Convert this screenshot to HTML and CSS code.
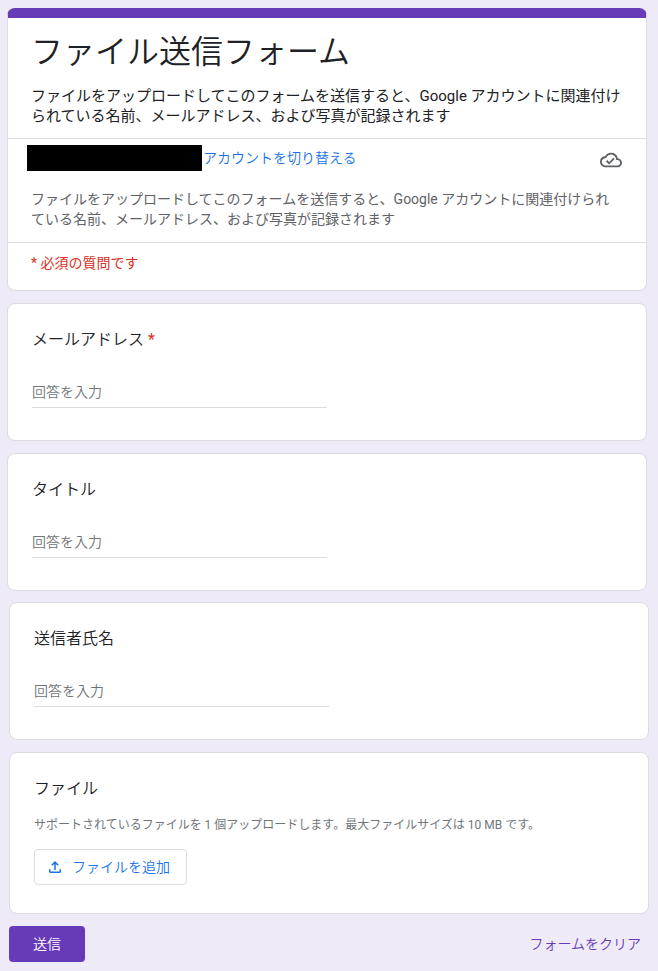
FILE: index.html
```
<!DOCTYPE html>
<html lang="ja">
<head>
    <meta charset="UTF-8">
    <meta name="viewport" content="width=device-width, initial-scale=1.0">
    <title>ファイル送信フォーム</title>
    <link rel="stylesheet" href="styles.css">
</head>
<body>
    <form class="form">
        <div class="group group-intro">
            <div class="card header">
                <div class="header-section">
                    <h1>ファイル送信フォーム</h1>
                    <p class="description">ファイルをアップロードしてこのフォームを送信すると、Google アカウントに関連付けられている名前、メールアドレス、および写真が記録されます</p>
                </div>
                <div class="header-section account">
                    <div class="account-row">
                        <span class="account-name"></span>
                        <a href="#">アカウントを切り替える</a>
                        <svg class="cloud" viewBox="0 0 24 24" aria-hidden="true">
                            <path d="M19.35 10.04A7.49 7.49 0 0 0 12 4C9.11 4 6.6 5.64 5.35 8.04A5.994 5.994 0 0 0 0 14c0 3.31 2.69 6 6 6h13c2.76 0 5-2.24 5-5 0-2.64-2.05-4.78-4.65-4.96zM19 18H6c-2.21 0-4-1.79-4-4 0-2.05 1.53-3.76 3.56-3.97l1.07-.11.5-.95A5.469 5.469 0 0 1 12 6c2.62 0 4.88 1.86 5.39 4.43l.3 1.5 1.53.11A2.98 2.98 0 0 1 22 15c0 1.65-1.35 3-3 3zm-9-3.82l-2.09-2.09L6.5 13.5 10 17l6.01-6.01-1.41-1.41z"/>
                        </svg>
                    </div>
                    <p class="notice">ファイルをアップロードしてこのフォームを送信すると、Google アカウントに関連付けられている名前、メールアドレス、および写真が記録されます</p>
                </div>
                <p class="header-section required-note">* 必須の質問です</p>
            </div>

            <div class="card question">
                <label for="email">メールアドレス <span class="required">*</span></label>
                <input type="email" id="email" placeholder="回答を入力" required>
            </div>

            <div class="card question">
                <label for="title">タイトル</label>
                <input type="text" id="title" placeholder="回答を入力">
            </div>
        </div>

        <div class="group group-sender">
            <div class="card question">
                <label for="sender">送信者氏名</label>
                <input type="text" id="sender" placeholder="回答を入力">
            </div>

            <div class="card question">
                <h2>ファイル</h2>
                <p class="help">サポートされているファイルを 1 個アップロードします。最大ファイルサイズは 10 MB です。</p>
                <button type="button" class="add-file">
                    <svg class="upload" viewBox="0 0 24 24" aria-hidden="true">
                        <path d="M4 15h2v3h12v-3h2v3c0 1.1-.9 2-2 2H6c-1.1 0-2-.9-2-2zM11 16V7.85L8.4 10.45 7 9l5-5 5 5-1.4 1.45L13 7.85V16z"/>
                    </svg>
                    ファイルを追加
                </button>
            </div>

            <div class="actions">
                <button type="submit" class="submit">送信</button>
                <button type="reset" class="clear">フォームをクリア</button>
            </div>
        </div>
    </form>
</body>
</html>
```
FILE: styles.css
```
* {
    box-sizing: border-box;
}
body {
    margin: 0;
    background-color: #eeeaf7;
    color: #202124;
    font-family: Roboto, "Noto Sans CJK JP", sans-serif;
    font-size: 14px;
    line-height: 20px;
}
h1, h2, p {
    margin: 0;
    font-weight: 400;
}
input, button {
    font: inherit;
}
a {
    color: #1a73e8;
    text-decoration: none;
}
h1, h2, a, label, input, button {
    font-weight: 350; /* DemiLight for the Japanese text */
}
.form {
    padding: 8px 0;
}
.group {
    display: flex;
    flex-direction: column;
    gap: 12px;
}
.group-intro {
    margin: 0 11px 11px 7px;
}
.group-sender {
    margin: 0 9px;
}
.card {
    background-color: #fff;
    border: 1px solid #dadce0;
    border-radius: 8px;
}

/* Title card */
.header {
    border-top: 10px solid #673ab7;
}
.header-section {
    padding: 12px 12px 12px 23px;
}
.header-section + .header-section {
    border-top: 1px solid #dadce0;
}
h1 {
    margin-bottom: 12px;
    font-size: 32px;
    line-height: 44px;
}
.description {
    font-size: 15px;
}
.account {
    padding: 6px 24px 13px 23px;
}
.account-row {
    display: flex;
    align-items: center;
    gap: 1px;
    margin: 0 0 18px -4px;
}
.account-name {
    width: 175px;
    height: 26px;
    background-color: #000;
}
.cloud {
    align-self: flex-end;
    width: 22px;
    height: 22px;
    margin-left: auto;
    fill: #5f6368;
}
.notice {
    color: #5f6368;
}
.required-note {
    padding: 10px 24px 17px 23px;
    color: #d93025;
}

/* Questions */
.question {
    display: flex;
    flex-direction: column;
    align-items: flex-start;
    padding: 24px 24px 28px;
}
.question label, h2 {
    font-size: 16px;
    line-height: 24px;
}
.required {
    color: #d93025;
    font-weight: 400;
}
.question input {
    width: 50%;
    height: 28px;
    margin: 28px 0 4px;
    padding: 0 0 3px;
    border: none;
    border-bottom: 1px solid #dadce0;
    background: none;
    outline: none;
}
.question input::placeholder {
    color: #70757a;
}
.question input:focus {
    border-bottom-color: #673ab7;
}
.help {
    margin: 16px 0;
    color: #70757a;
    font-size: 12px;
    line-height: 16px;
}
button {
    height: 36px;
    border: none;
    border-radius: 4px;
    cursor: pointer;
}
.add-file {
    display: flex;
    align-items: center;
    gap: 8px;
    padding: 0 16px 0 11px;
    border: 1px solid #dadce0;
    background-color: #fff;
    color: #1a73e8;
}
.upload {
    width: 18px;
    height: 18px;
    fill: currentColor;
}
.actions {
    display: flex;
    justify-content: space-between;
}
.submit {
    padding: 0 24px;
    background-color: #673ab7;
    color: #fff;
}
.clear {
    padding: 0 8px;
    background: none;
    color: #673ab7;
}
```
